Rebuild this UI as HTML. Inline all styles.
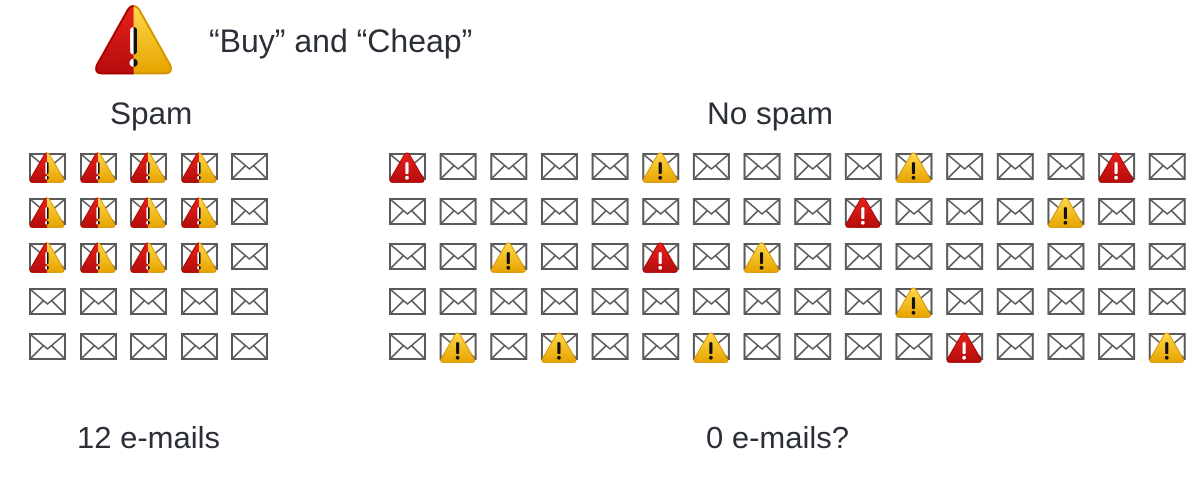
<!DOCTYPE html>
<html><head><meta charset="utf-8"><style>
body{margin:0;width:1201px;height:494px;background:#fff;overflow:hidden;position:relative;font-family:"Liberation Sans",sans-serif;color:#2b3038}
.t{position:absolute;font-size:31.5px;white-space:nowrap;line-height:1}
svg{position:absolute;left:0;top:0}
</style></head><body>
<div class="t" style="left:209px;top:25px;font-size:32px">“Buy” and “Cheap”</div>
<div class="t" style="left:110px;top:98px">Spam</div>
<div class="t" style="left:707px;top:98px">No spam</div>
<div class="t" style="left:77px;top:422px;font-size:31px">12 e-mails</div>
<div class="t" style="left:706px;top:422px;font-size:31px">0 e-mails?</div>
<svg width="1201" height="494" viewBox="0 0 1201 494">
<defs>
<linearGradient id="gy" x1="0" y1="0" x2="0" y2="1"><stop offset="0" stop-color="#ffd84a"/><stop offset="1" stop-color="#e7a400"/></linearGradient>
<linearGradient id="gr" x1="0" y1="0" x2="0" y2="1"><stop offset="0" stop-color="#e8201a"/><stop offset="1" stop-color="#b40d0d"/></linearGradient>
<clipPath id="cl"><rect x="0" y="0" width="19" height="40"/></clipPath>
<g id="env"><rect x="1" y="1" width="35" height="25" fill="#fff" stroke="#5a5a5a" stroke-width="2"/><path d="M2 2 L18.5 16 L35 2 M2 25 L14 13 M35 25 L23 13" fill="none" stroke="#5a5a5a" stroke-width="1.6"/></g>
<path id="tri" d="M19 1 Q21 1 22.5 4 L37 29 Q38.5 33 34.5 33 L3.5 33 Q-0.5 33 1 29 L15.5 4 Q17 1 19 1Z"/>
<g id="wy"><use href="#tri" fill="url(#gy)" stroke="#d49400" stroke-width="1"/><rect x="17.3" y="11" width="3.4" height="13" rx="1.5" fill="#111"/><circle cx="19" cy="28" r="2" fill="#111"/></g>
<g id="wr"><use href="#tri" fill="url(#gr)" stroke="#a00" stroke-width="1"/><rect x="17.3" y="11" width="3.4" height="13" rx="1.5" fill="#fff"/><circle cx="19" cy="28" r="2" fill="#fff"/></g>
<g id="ws"><use href="#wy"/><g clip-path="url(#cl)"><use href="#wr"/></g></g>
</defs>
<g transform="translate(95,4) scale(2.03,2.1)"><use href="#ws"/></g>
<g id="grid"></g>
</svg>
<script>
var g=document.getElementById('grid'),s='';
function ic(x,y,k){s+='<use href="#env" x="'+x+'" y="'+y+'"/>';if(k)s+='<g transform="translate('+(x+0.5)+','+(y-1)+') scale(0.92)"><use href="#'+k+'"/></g>';}
var sx=[29,80,130,181,231],ys=[153,198,243,288,333];
for(var r=0;r<5;r++)for(var c=0;c<5;c++)ic(sx[c],ys[r],(r<3&&c<4)?'ws':'');
var m={'0,0':'wr','0,5':'wy','0,10':'wy','0,14':'wr','1,9':'wr','1,13':'wy','2,2':'wy','2,5':'wr','2,7':'wy','3,10':'wy','4,1':'wy','4,3':'wy','4,6':'wy','4,11':'wr','4,15':'wy'};
for(var r=0;r<5;r++)for(var c=0;c<16;c++)ic(389+c*50.65,ys[r],m[r+','+c]||'');
g.innerHTML=s;
</script>
</body></html>
